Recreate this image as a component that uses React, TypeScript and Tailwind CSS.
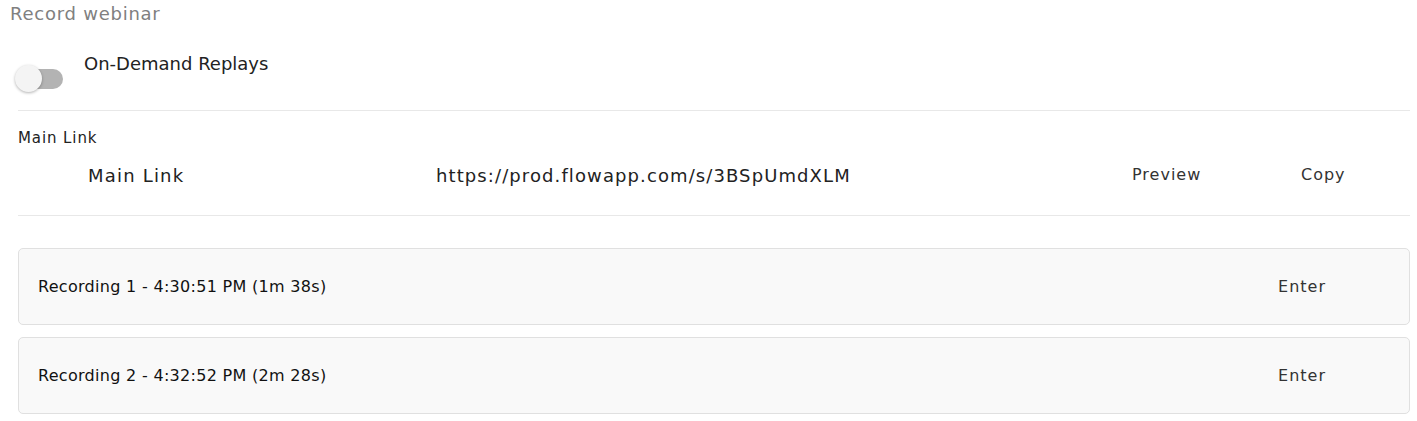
import React from "react";

const font = { fontFamily: '"DejaVu Sans", "Open Sans", sans-serif' };

function Toggle() {
  return (
    <div className="relative w-[50px] h-[28px]">
      <div className="absolute left-[3px] top-[4px] w-[45px] h-[20px] rounded-full bg-[#b3b3b3]" />
      <div className="absolute left-0 top-0 w-[27px] h-[27px] rounded-full bg-[#f4f4f4] shadow-[0_1px_3px_rgba(0,0,0,0.3)]" />
    </div>
  );
}

function RecordingCard({ label }: { label: string }) {
  return (
    <div className="flex items-center justify-between h-[77px] rounded-[5px] border border-[#e0e0e0] bg-[#f9f9f9] pl-[19px] pr-[83px]">
      <span className="text-[16px] tracking-[0.3px] text-[#111]">{label}</span>
      <span className="text-[16px] tracking-[1px] text-[#333]">Enter</span>
    </div>
  );
}

export default function App() {
  return (
    <div className="bg-white w-[1417px] h-[421px] overflow-hidden" style={font}>
      <div className="pl-[10px] pt-[3px] h-[25px] text-[18px] leading-[22px] tracking-[0.75px] text-[#808080]">Record webinar</div>
      <div className="flex pl-[15px] h-[85px]">
        <div className="pt-[40px]">
          <Toggle />
        </div>
        <div className="pl-[19px] pt-[28px] text-[18px] leading-[22px] text-[#222]">On-Demand Replays</div>
      </div>
      <div className="ml-[18px] mr-[7px] h-[1px] bg-[#e8e8e8]" />
      <div className="pl-[18px] mt-[18px] text-[15px] leading-[18px] tracking-[0.9px] text-[#222]">Main Link</div>
      <div className="flex items-center h-[38px] mt-[9px] ml-[18px] text-[#222]">
        <span className="ml-[70px] w-[348px] text-[18px] tracking-[1.2px]">Main Link</span>
        <span className="text-[18px] tracking-[1.1px]">https://prod.flowapp.com/s/3BSpUmdXLM</span>
        <div className="flex-1" />
        <span className="text-[16px] tracking-[1px] text-[#333] w-[169px]">Preview</span>
        <span className="text-[16px] tracking-[1px] text-[#333] w-[116px]">Copy</span>
      </div>
      <div className="ml-[18px] mr-[7px] mt-[21px] h-[1px] bg-[#e8e8e8]" />
      <div className="ml-[18px] mr-[7px] mt-[32px] flex flex-col gap-[12px]">
        <RecordingCard label="Recording 1 - 4:30:51 PM (1m 38s)" />
        <RecordingCard label="Recording 2 - 4:32:52 PM (2m 28s)" />
      </div>
    </div>
  );
}
